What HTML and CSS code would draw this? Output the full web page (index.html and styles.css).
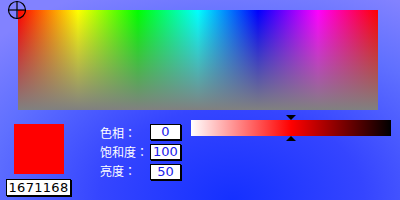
FILE: index.html
```html
<!DOCTYPE html>
<html>
<head>
<meta charset="utf-8">
<link rel="stylesheet" href="styles.css">
</head>
<body>
<div class="picker">
  <div class="top">
    <div class="huebox">
      <svg class="cross" width="20" height="20" viewBox="0 0 20 20">
        <circle cx="10" cy="10" r="8.5" fill="none" stroke="#000" stroke-width="1.2"/>
        <line x1="1.5" y1="10" x2="18.5" y2="10" stroke="#000" stroke-width="1.2"/>
        <line x1="10" y1="1.5" x2="10" y2="18.5" stroke="#000" stroke-width="1.2"/>
      </svg>
    </div>
  </div>
  <div class="bottom">
    <div class="left">
      <div class="swatch"></div>
      <div class="code">1671168</div>
    </div>
    <div class="labels">
      <div class="lab">色相：</div>
      <div class="lab">饱和度：</div>
      <div class="lab">亮度：</div>
    </div>
    <div class="inputs">
      <div class="inp">0</div>
      <div class="inp">100</div>
      <div class="inp">50</div>
    </div>
    <div class="lumwrap">
      <div class="tri down"></div>
      <div class="lum"></div>
      <div class="tri up"></div>
    </div>
  </div>
</div>
</body>
</html>
```
FILE: styles.css
```css
html, body {
  margin: 0;
  padding: 0;
}
body {
  width: 400px;
  height: 200px;
  overflow: hidden;
  background: radial-gradient(ellipse 330px 230px at 58% 100%, #1530ff 0%, #3545ff 40%, #6070ff 75%, #8282ff 100%);
  background-color: #8282ff;
  font-family: "DejaVu Sans", "Noto Sans CJK SC", sans-serif;
}
.picker {
  width: 400px;
  height: 200px;
  display: flex;
  flex-direction: column;
}
.top {
  padding: 10px 0 0 18px;
}
.huebox {
  position: relative;
  width: 360px;
  height: 100px;
  background:
    linear-gradient(to bottom, rgba(128,128,128,0) 0%, #808080 100%),
    linear-gradient(to right, #ff0000 0%, #ffff00 16.67%, #00ff00 33.33%, #00ffff 50%, #0000ff 66.67%, #ff00ff 83.33%, #ff0000 100%);
}
.cross {
  position: absolute;
  left: -11px;
  top: -10px;
}
.bottom {
  display: flex;
  padding-top: 10px;
}
.left {
  display: flex;
  flex-direction: column;
  margin-left: 6px;
  width: 66px;
}
.swatch {
  width: 50px;
  height: 50px;
  background: #ff0000;
  margin: 4px 0 0 8px;
}
.code {
  margin-top: 5px;
  width: 63px;
  height: 15px;
  background: #fff;
  border: 1px solid #000;
  box-shadow: 1px 1px 0 #000;
  font-size: 13px;
  line-height: 15px;
  text-align: center;
  letter-spacing: 0.3px;
  color: #000;
}
.labels {
  margin-left: 28px;
  width: 50px;
  padding-top: 3px;
  display: flex;
  flex-direction: column;
}
.lab {
  height: 19px;
  line-height: 19px;
  font-size: 12px;
  color: #fff;
  font-family: "Noto Sans CJK JP", sans-serif;
}
.inputs {
  padding-top: 4px;
  display: flex;
  flex-direction: column;
  gap: 4px;
}
.inp {
  width: 29px;
  height: 14px;
  background: #fff;
  border: 1px solid #000;
  box-shadow: 1px 1px 0 #000;
  color: #2020e8;
  font-size: 13px;
  line-height: 14px;
  text-align: center;
}
.lumwrap {
  margin-left: 10px;
  margin-top: -5px;
  display: flex;
  flex-direction: column;
  align-items: flex-start;
}
.lum {
  width: 200px;
  height: 16px;
  background: linear-gradient(to right, #ffffff 0%, #ff0000 50%, #000000 100%);
}
.tri {
  width: 0;
  height: 0;
  border-left: 5px solid transparent;
  border-right: 5px solid transparent;
  margin-left: 95px;
}
.tri.down {
  border-top: 5px solid #000;
}
.tri.up {
  border-bottom: 5px solid #000;
}
```
